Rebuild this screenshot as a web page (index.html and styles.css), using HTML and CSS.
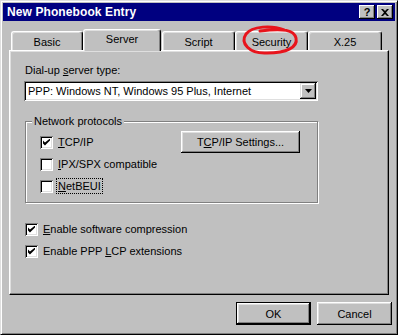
FILE: index.html
```html
<!DOCTYPE html>
<html lang="en">
<head>
    <meta charset="UTF-8">
    <title>New Phonebook Entry</title>
    <link rel="stylesheet" href="styles.css">
</head>
<body>
    <div class="window">
        <div class="titlebar">
            <span class="title">New Phonebook Entry</span>
            <div class="title-buttons">
                <span class="tbtn help">?</span>
                <span class="tbtn close">
                    <svg width="8" height="7" viewBox="0 0 8 7"><path d="M0 0h2l2 2 2-2h2L5 3.5 8 7H6L4 5 2 7H0l3-3.5z" fill="#000"/></svg>
                </span>
            </div>
        </div>

        <div class="tabs">
            <div class="tab w-basic">Basic</div>
            <div class="tab selected w-server">Server</div>
            <div class="tab w-script">Script</div>
            <div class="tab w-security">Security</div>
            <div class="tab w-x25">X.25</div>
        </div>

        <div class="panel">
            <div class="label">Dial-up <u>s</u>erver type:</div>
            <div class="combo">
                <span class="combo-text">PPP: Windows NT, Windows 95 Plus, Internet</span>
                <span class="combo-btn">
                    <svg width="7" height="4" viewBox="0 0 7 4"><path d="M0 0h7L3.5 4z" fill="#000"/></svg>
                </span>
            </div>

            <fieldset class="group">
                <legend>Network protocols</legend>
                <div class="group-body">
                    <div class="row">
                        <span class="check on"></span>
                        <span><u>T</u>CP/IP</span>
                        <span class="button settings">T<u>C</u>P/IP Settings...</span>
                    </div>
                    <div class="row">
                        <span class="check"></span>
                        <span><u>I</u>PX/SPX compatible</span>
                    </div>
                    <div class="row">
                        <span class="check"></span>
                        <span class="focus"><u>N</u>etBEUI</span>
                    </div>
                </div>
            </fieldset>

            <div class="row first-opt">
                <span class="check on"></span>
                <span><u>E</u>nable software compression</span>
            </div>
            <div class="row">
                <span class="check on"></span>
                <span>Enable PPP <u>L</u>CP extensions</span>
            </div>
        </div>

        <div class="actions">
            <span class="button default">OK</span>
            <span class="button">Cancel</span>
        </div>

        <svg class="scribble" width="398" height="335" viewBox="0 0 398 335">
            <path d="M284 30 C272 25 252 26 246 34 C240 43 249 54 267 53 C287 53 298 47 296 38 C294 30 284 28 260 31" fill="none" stroke="#e8141c" stroke-width="3" stroke-linecap="round"/>
        </svg>
    </div>
</body>
</html>
```

FILE: styles.css
```css
:root {
    --face: #c0c0c0;
    --light: #dfdfdf;
    --shadow: #808080;
    --dark: #000000;
    --navy: #000080;
}
body {
    margin: 0;
    font-family: 'Liberation Sans', Arial, sans-serif;
    font-size: 11px;
    color: #000;
    background: var(--face);
}
u {
    text-decoration: underline;
    text-underline-offset: 1px;
}
.window {
    position: relative;
    box-sizing: border-box;
    width: 398px;
    height: 335px;
    padding: 2px;
    background: var(--face);
    border: 1px solid;
    border-color: var(--light) var(--dark) var(--dark) var(--light);
    box-shadow: inset 1px 1px #fff, inset -1px -1px var(--shadow);
}
.titlebar {
    height: 18px;
    background: var(--navy);
    display: flex;
    align-items: center;
    justify-content: space-between;
    padding: 0 2px 0 4px;
}
.title {
    color: #fff;
    font-weight: bold;
    font-size: 12px;
    letter-spacing: 0.1px;
}
.title-buttons {
    display: flex;
    gap: 2px;
}
.tbtn {
    width: 16px;
    height: 14px;
    background: var(--face);
    display: flex;
    align-items: center;
    justify-content: center;
    box-shadow: inset -1px -1px var(--dark), inset 1px 1px #fff, inset -2px -2px var(--shadow);
    font-weight: bold;
    font-size: 11px;
    line-height: 14px;
}
.tabs {
    display: flex;
    align-items: flex-end;
    height: 22px;
    margin: 7px 6px 0;
    padding-left: 2px;
}
.tab {
    box-sizing: border-box;
    height: 19px;
    border: 1px solid;
    border-bottom: none;
    border-color: #fff var(--dark) transparent #fff;
    border-radius: 3px 3px 0 0;
    box-shadow: inset -1px 0 var(--shadow), inset 1px 1px var(--light);
    display: flex;
    align-items: center;
    justify-content: center;
    padding-top: 1px;
}
.tab.selected {
    position: relative;
    z-index: 1;
    height: 22px;
    margin-bottom: -1px;
    background: var(--face);
    padding-bottom: 4px;
}
.w-basic { width: 72px; }
.w-server { width: 78px; }
.w-script { width: 73px; margin-left: 1px; }
.w-security { width: 73px; }
.w-x25 { width: 74px; }
.panel {
    box-sizing: border-box;
    height: 245px;
    margin: 0 6px;
    padding: 13px 15px 0;
    border: 1px solid;
    border-color: #fff var(--dark) var(--dark) #fff;
    box-shadow: inset -1px -1px var(--shadow), inset 1px 1px var(--light);
}
.label {
    line-height: 13px;
    margin-bottom: 4px;
}
.combo {
    box-sizing: border-box;
    width: 294px;
    height: 20px;
    margin-left: -1px;
    background: #fff;
    display: flex;
    align-items: center;
    justify-content: space-between;
    padding: 2px;
    box-shadow: inset 1px 1px var(--shadow), inset -1px -1px #fff, inset 2px 2px var(--dark), inset -2px -2px var(--light);
}
.combo-text {
    padding-left: 2px;
    font-size: 11px;
}
.combo-btn {
    width: 16px;
    height: 16px;
    background: var(--face);
    display: flex;
    align-items: center;
    justify-content: center;
    box-shadow: inset -1px -1px var(--dark), inset 1px 1px var(--light), inset -2px -2px var(--shadow), inset 2px 2px #fff;
}
.group {
    box-sizing: border-box;
    width: 293px;
    margin: 14px 0 0;
    padding: 0;
    border: 1px solid var(--shadow);
    box-shadow: inset 1px 1px #fff, 1px 1px #fff;
}
.group legend {
    margin-left: 6px;
    padding: 0 2px;
    line-height: 13px;
    background: var(--face);
}
.group-body {
    padding: 3px 17px 5px 14px;
}
.row {
    display: flex;
    align-items: center;
    height: 22px;
    gap: 5px;
}
.first-opt {
    margin-top: 15px;
}
.check {
    position: relative;
    width: 13px;
    height: 13px;
    flex: none;
    background: #fff;
    box-sizing: border-box;
    box-shadow: inset 1px 1px var(--shadow), inset -1px -1px #fff, inset 2px 2px var(--dark), inset -2px -2px var(--light);
}
.check.on::after {
    content: "";
    position: absolute;
    left: 3px;
    top: 3px;
    width: 7px;
    height: 7px;
    background: linear-gradient(#000, #000);
    clip-path: polygon(0 28%, 0 71%, 28% 100%, 100% 28%, 100% 0, 28% 57%);
}
.focus {
    outline: 1px dotted #000;
    outline-offset: 1px;
}
.button {
    box-sizing: border-box;
    height: 23px;
    display: inline-flex;
    align-items: center;
    justify-content: center;
    background: var(--face);
    box-shadow: inset -1px -1px var(--dark), inset 1px 1px #fff, inset -2px -2px var(--shadow), inset 2px 2px var(--light);
}
.settings {
    width: 119px;
    height: 22px;
    margin-left: auto;
}
.actions {
    display: flex;
    justify-content: flex-end;
    gap: 6px;
    margin: 7px 3px 0 0;
}
.actions .button {
    width: 75px;
}
.button.default {
    border: 1px solid #000;
}
.scribble {
    position: absolute;
    left: -1px;
    top: -1px;
    pointer-events: none;
}
```
